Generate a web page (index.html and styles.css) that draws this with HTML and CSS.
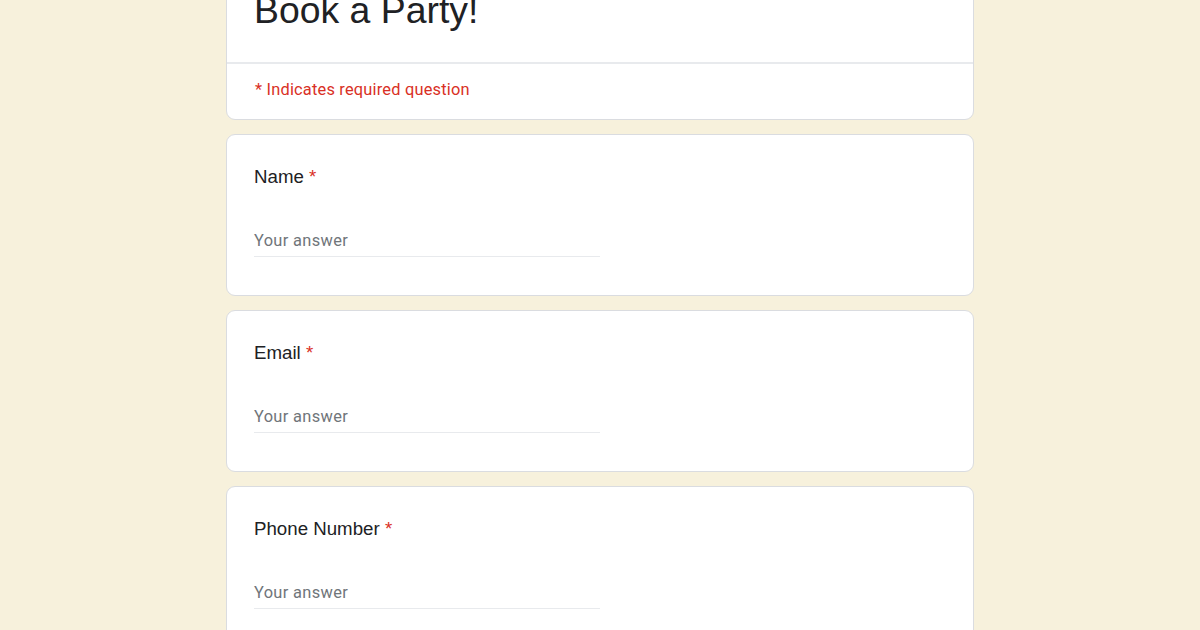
FILE: index.html
```html
<!DOCTYPE html>
<html lang="en">
<head>
<meta charset="utf-8">
<title>Book a Party!</title>
<link rel="stylesheet" href="styles.css">
</head>
<body>
<main class="form">
  <section class="card header-card">
    <div class="title-block">
      <h1 class="title">Book a Party!</h1>
    </div>
    <div class="required-note">* Indicates required question</div>
  </section>

  <section class="card question">
    <div class="label">Name <span class="req">*</span></div>
    <div class="answer">Your answer</div>
  </section>

  <section class="card question">
    <div class="label">Email <span class="req">*</span></div>
    <div class="answer">Your answer</div>
  </section>

  <section class="card question">
    <div class="label">Phone Number <span class="req">*</span></div>
    <div class="answer">Your answer</div>
  </section>
</main>
</body>
</html>
```

FILE: styles.css
```css
html, body {
  margin: 0;
  padding: 0;
  background: #f7f1dc;
  overflow: hidden;
}

body {
  height: 630px;
}

.form {
  width: 748px;
  margin: -42px auto 0;
  display: flex;
  flex-direction: column;
  gap: 14px;
}

.card {
  box-sizing: border-box;
  background: #ffffff;
  border: 1px solid #dadce0;
  border-radius: 9px;
}

.title-block {
  padding: 28px 27px 28px;
  border-bottom: 2px solid #e8eaed;
}

.title {
  margin: 0;
  font-family: "Liberation Sans", Arial, sans-serif;
  font-weight: 400;
  font-size: 37.4px;
  line-height: 47px;
  color: #202124;
}

.required-note {
  padding: 14px 27px 18px 28px;
  font-family: Roboto, "Liberation Sans", sans-serif;
  font-size: 16.4px;
  line-height: 23px;
  letter-spacing: 0.2px;
  color: #d93025;
}

.question {
  padding: 28px 27px 38px;
}

.label {
  font-family: "Liberation Sans", Arial, sans-serif;
  font-size: 18.7px;
  line-height: 28px;
  color: #202124;
}

.req {
  color: #d93025;
}

.answer {
  box-sizing: border-box;
  width: 346px;
  margin-top: 33px;
  height: 33px;
  line-height: 33px;
  border-bottom: 1px solid #e8eaed;
  font-family: Roboto, "Liberation Sans", sans-serif;
  font-size: 16.4px;
  letter-spacing: 0.35px;
  color: #70757a;
}
```
